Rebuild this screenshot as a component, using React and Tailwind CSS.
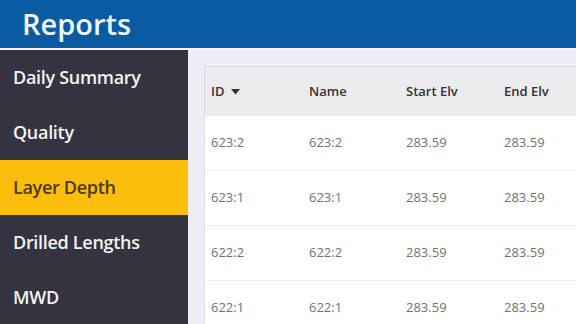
const menu = ["Daily Summary", "Quality", "Layer Depth", "Drilled Lengths", "MWD"];

const rows = [
  { id: "623:2", name: "623:2", start: "283.59", end: "283.59" },
  { id: "623:1", name: "623:1", start: "283.59", end: "283.59" },
  { id: "622:2", name: "622:2", start: "283.59", end: "283.59" },
  { id: "622:1", name: "622:1", start: "283.59", end: "283.59" },
];

export default function App() {
  return (
    <div className="w-[576px] h-[324px] overflow-hidden flex flex-col font-['Open_Sans',sans-serif] bg-[#efedf5]">
      {/* Header */}
      <div className="h-[50px] shrink-0 bg-[#0a5ba1] flex items-center pl-[22px] border-b-2 border-[#f4f8fc]">
        <h1 className="text-[29px] font-semibold text-[#eef8fb] leading-none pb-[2px]">Reports</h1>
      </div>

      <div className="flex flex-1 min-h-0">
        {/* Sidebar */}
        <div className="w-[188px] shrink-0 bg-[#34333f] flex flex-col">
          {menu.map(m => (
            <div
              key={m}
              className={
                m === "Layer Depth"
                  ? "h-[55px] shrink-0 flex items-center pl-[13px] text-[18px] font-semibold text-[#4a3a14] bg-[#fbbe0d] tracking-[-0.3px]"
                  : "h-[55px] shrink-0 flex items-center pl-[13px] text-[18px] font-semibold text-[#f2f2f4] tracking-[-0.3px]"
              }
            >
              {m}
            </div>
          ))}
        </div>

        {/* Content */}
        <div className="flex-1 pl-[16px] pt-[16px]">
          <div className="bg-white border-l border-t border-[#dcdbe2] h-full">
            <div className="h-[49px] bg-[#ececee] flex items-center text-[13px] font-semibold text-[#333]">
              <div className="w-[98px] pl-[6px] flex items-center gap-[6px]">
                ID
                <svg width="9" height="6" viewBox="0 0 9 6"><path d="M0 0h9L4.5 5.5z" fill="#333" /></svg>
              </div>
              <div className="w-[97px] pl-[6px]">Name</div>
              <div className="w-[98px] pl-[6px]">Start Elv</div>
              <div className="w-[80px] pl-[6px]">End Elv</div>
            </div>
            {rows.map(r => (
              <div key={r.id} className="h-[55px] flex items-center text-[13px] text-[#727272] border-b border-[#eeeeef]">
                <div className="w-[98px] pl-[6px]">{r.id}</div>
                <div className="w-[97px] pl-[6px]">{r.name}</div>
                <div className="w-[98px] pl-[6px]">{r.start}</div>
                <div className="w-[80px] pl-[6px]">{r.end}</div>
              </div>
            ))}
          </div>
        </div>
      </div>
    </div>
  );
}
